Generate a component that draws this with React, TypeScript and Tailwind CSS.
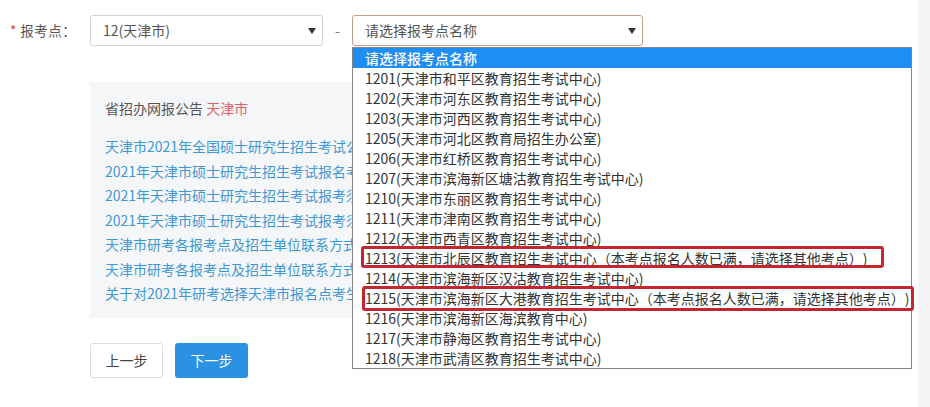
import React from "react";

const options = [
  "1201(天津市和平区教育招生考试中心)",
  "1202(天津市河东区教育招生考试中心)",
  "1203(天津市河西区教育招生考试中心)",
  "1205(天津市河北区教育局招生办公室)",
  "1206(天津市红桥区教育招生考试中心)",
  "1207(天津市滨海新区塘沽教育招生考试中心)",
  "1210(天津市东丽区教育招生考试中心)",
  "1211(天津市津南区教育招生考试中心)",
  "1212(天津市西青区教育招生考试中心)",
  "1213(天津市北辰区教育招生考试中心（本考点报名人数已满，请选择其他考点）)",
  "1214(天津市滨海新区汉沽教育招生考试中心)",
  "1215(天津市滨海新区大港教育招生考试中心（本考点报名人数已满，请选择其他考点）)",
  "1216(天津市滨海新区海滨教育中心)",
  "1217(天津市静海区教育招生考试中心)",
  "1218(天津市武清区教育招生考试中心)",
];

const links = [
  "天津市2021年全国硕士研究生招生考试公告",
  "2021年天津市硕士研究生招生考试报名考生须知",
  "2021年天津市硕士研究生招生考试报考须知",
  "2021年天津市硕士研究生招生考试报考须知（二）",
  "天津市研考各报考点及招生单位联系方式",
  "天津市研考各报考点及招生单位联系方式（更新）",
  "关于对2021年研考选择天津市报名点考生的提示",
];

function Arrow() {
  return (
    <svg width="8" height="6" viewBox="0 0 8 6" className="shrink-0">
      <path d="M0 0 L8 0 L4 6 Z" fill="#333" />
    </svg>
  );
}

export default function App() {
  return (
    <div className="relative w-[930px] h-[407px] overflow-hidden bg-white flex font-['Noto_Sans_CJK_SC',sans-serif] text-[14px] [text-spacing-trim:space-all]">
      <div className="flex-1 flex flex-col pt-[15px]">
        {/* form row */}
        <div className="flex items-center h-[31px]">
          <div className="w-[90px] pl-[10px] flex items-center text-[13.5px] text-[#555]">
            <span className="text-[#e4393c] mr-[4px]">*</span>
            <span className="tracking-[0.5px]">报考点：</span>
          </div>
          <div className="w-[233px] h-[31px] border border-[#d4d4d4] rounded-[3px] flex items-center justify-between pl-[12px] pr-[6px] text-[#555]">
            <span>12(天津市)</span>
            <Arrow />
          </div>
          <div className="w-[29px] text-center text-[#777]">-</div>
          <div className="relative w-[291px] h-[31px]">
            <div className="h-full border border-[#c69b8e] rounded-[3px] flex items-center justify-between pl-[12px] pr-[6px] text-[#555]">
              <span>请选择报考点名称</span>
              <Arrow />
            </div>
            <div className="absolute top-[32px] left-0 w-[560px] border border-[#858585] bg-white z-10">
              <div className="h-[20px] leading-[20px] pl-[12px] bg-[#1e8ef5] text-white font-medium whitespace-nowrap">请选择报考点名称</div>
              {options.map((o) => (
                <div key={o} className="h-[20px] leading-[20px] pl-[12px] text-[#333] whitespace-nowrap">
                  {o}
                </div>
              ))}
            </div>
          </div>
        </div>

        {/* notice panel */}
        <div className="mt-[36px] ml-[90px] w-[780px] h-[236px] bg-[#f5f6f8] pt-[16px] pl-[15px] overflow-hidden">
          <div className="leading-[20px] text-[#555]">
            省招办网报公告 <span className="text-[#e0606a]">天津市</span>
          </div>
          <div className="mt-[16px] flex flex-col">
            {links.map((l) => (
              <div key={l} className="leading-[24.5px] text-[#3f97d6] whitespace-nowrap">
                {l}
              </div>
            ))}
          </div>
        </div>

        {/* buttons */}
        <div className="mt-[25px] ml-[90px] flex gap-[12px]">
          <button className="w-[73px] h-[35px] border border-[#dcdcdc] rounded-[3px] bg-white text-[#444]">上一步</button>
          <button className="w-[73px] h-[35px] rounded-[3px] bg-[#2b91e3] text-white">下一步</button>
        </div>
      </div>
      <div className="w-[12px] h-full bg-[#f5f5f5]" />

      {/* annotation boxes */}
      <div className="absolute left-[361px] top-[246px] w-[523px] h-[22px] border-[3px] border-[#c3262d] rounded-[3px] z-20" />
      <div className="absolute left-[362px] top-[286px] w-[552px] h-[25px] border-[3px] border-[#c3262d] rounded-[3px] z-20" />
    </div>
  );
}
